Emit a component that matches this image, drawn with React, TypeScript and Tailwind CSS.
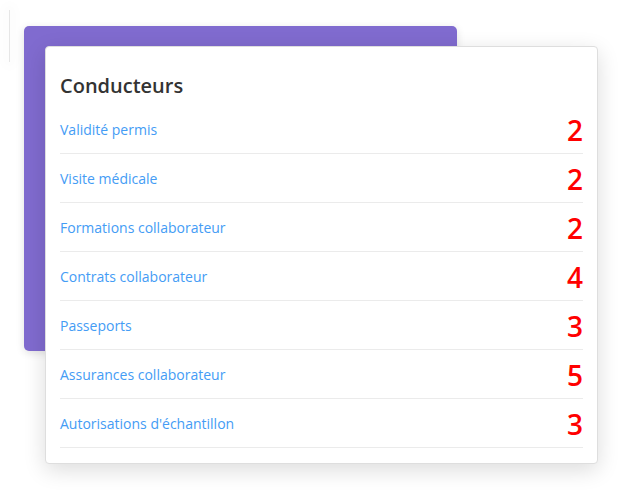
import React from "react";

const rows: { label: string; count: number }[] = [
  { label: "Validité permis", count: 2 },
  { label: "Visite médicale", count: 2 },
  { label: "Formations collaborateur", count: 2 },
  { label: "Contrats collaborateur", count: 4 },
  { label: "Passeports", count: 3 },
  { label: "Assurances collaborateur", count: 5 },
  { label: "Autorisations d'échantillon", count: 3 },
];

export default function App() {
  return (
    <div
      className="w-[624px] h-[490px] bg-white flex items-start overflow-hidden"
      style={{ fontFamily: '"Open Sans", "Noto Sans", sans-serif' }}
    >
      <div className="ml-[9px] mt-[10px] h-[52px] w-px bg-[#e6e6e6] shadow-[0_0_12px_6px_rgba(0,0,0,0.015)]" />
      <div className="relative ml-[14px] mt-[26px] w-[433px] h-[325px] rounded-[5px] bg-[#806bcf] shadow-[0_2px_8px_rgba(0,0,0,0.12)]">
        <div className="absolute left-[21px] top-[20px] w-[553px] rounded-[4px] border border-[#dedede] bg-white px-[14px] pb-[15px] pt-[27px] shadow-[0_6px_22px_rgba(0,0,0,0.14)]">
          <h5 className="mb-[7px] text-[20px] leading-[24px] font-semibold text-[#333333]">Conducteurs</h5>
          <ul>
            {rows.map((r) => (
              <li
                key={r.label}
                className="flex h-[49px] items-center justify-between border-b border-[#ebebeb] pt-[2px]"
              >
                <a className="text-[14px] leading-[20px] text-[#449cf5] cursor-pointer">{r.label}</a>
                <span className="text-[28px] leading-[28px] font-semibold text-[#ff0000]">{r.count}</span>
              </li>
            ))}
          </ul>
        </div>
      </div>
    </div>
  );
}
